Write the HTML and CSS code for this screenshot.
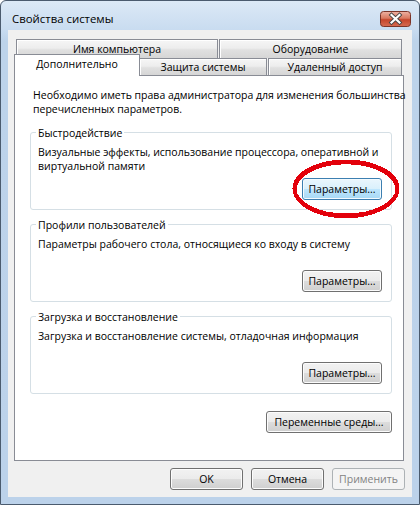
FILE: index.html
```html
<!DOCTYPE html>
<html lang="ru">
<head>
<meta charset="utf-8">
<title>Свойства системы</title>
<link rel="stylesheet" href="styles.css">
</head>
<body>
<div class="window">
  <div class="titlebar">
    <span class="title">Свойства системы</span>
    <button class="close" aria-label="Закрыть">
      <svg width="31" height="16" viewBox="0 0 31 16">
        <defs>
          <linearGradient id="cg" x1="0" y1="0" x2="0" y2="1">
            <stop offset="0" stop-color="#eeb3a5"/>
            <stop offset="0.45" stop-color="#d9785f"/>
            <stop offset="0.55" stop-color="#c5452b"/>
            <stop offset="1" stop-color="#d66c52"/>
          </linearGradient>
        </defs>
        <rect x="0.5" y="0.5" width="30" height="15" rx="3" fill="url(#cg)" stroke="#7b3428"/>
        <path d="M11.5 4 L19.5 11.5 M19.5 4 L11.5 11.5" stroke="#444" stroke-width="4" stroke-linecap="square"/>
        <path d="M11.5 4 L19.5 11.5 M19.5 4 L11.5 11.5" stroke="#fff" stroke-width="2.2" stroke-linecap="square"/>
      </svg>
    </button>
  </div>
  <div class="client">
    <div class="tabctl">
      <div class="tabrow row1">
        <div class="tab tab-name">Имя компьютера</div>
        <div class="tab tab-hw">Оборудование</div>
      </div>
      <div class="tabrow row2">
        <div class="tab tab-active tab-adv">Дополнительно</div>
        <div class="tab tab-prot">Защита системы</div>
        <div class="tab tab-remote">Удаленный доступ</div>
      </div>
      <div class="panel">
        <p class="note">Необходимо иметь права администратора для изменения большинства<br>перечисленных параметров.</p>
        <div class="group">
          <div class="group-title">Быстродействие</div>
          <p class="group-text">Визуальные эффекты, использование процессора, оперативной и<br>виртуальной памяти</p>
          <div class="group-actions">
            <span class="marked">
              <button class="btn btn-focus btn-param">Параметры...</button>
              <svg class="mark" width="108" height="60" viewBox="0 0 108 60" shape-rendering="crispEdges">
                <ellipse cx="54" cy="29.5" rx="51.5" ry="27" fill="none" stroke="#e3000b" stroke-width="4"/>
                <ellipse cx="54" cy="30.5" rx="51" ry="27" fill="none" stroke="#e3000b" stroke-width="3.5"/>
              </svg>
            </span>
          </div>
        </div>
        <div class="group">
          <div class="group-title">Профили пользователей</div>
          <p class="group-text">Параметры рабочего стола, относящиеся ко входу в систему</p>
          <div class="group-actions">
            <button class="btn btn-param">Параметры...</button>
          </div>
        </div>
        <div class="group">
          <div class="group-title">Загрузка и восстановление</div>
          <p class="group-text">Загрузка и восстановление системы, отладочная информация</p>
          <div class="group-actions">
            <button class="btn btn-param">Параметры...</button>
          </div>
        </div>
        <div class="panel-actions">
          <button class="btn btn-env">Переменные среды...</button>
        </div>
      </div>
    </div>
    <div class="dialog-actions">
      <button class="btn btn-dlg">OK</button>
      <button class="btn btn-dlg">Отмена</button>
      <button class="btn btn-dlg" disabled>Применить</button>
    </div>
  </div>
</div>
</body>
</html>
```
FILE: styles.css
```css
html, body {
  margin: 0;
  padding: 0;
  background: #ffffff;
}

body {
  font-family: "Open Sans", "Noto Sans", sans-serif;
  font-size: 10.5px;
  color: #000;
}

.window {
  width: 420px;
  height: 505px;
  box-sizing: border-box;
  border: 1px solid #4b5b6e;
  border-radius: 6px 6px 0 0;
  background: linear-gradient(to bottom, #dce9f6 0px, #c9dcf0 28px, #bdd3ea 40px, #bcd2ea 100%);
  padding: 0 7px 7px;
  display: flex;
  flex-direction: column;
}

.titlebar {
  height: 29px;
  margin: 0 -7px;
  padding: 0 8px 0 11px;
  display: flex;
  justify-content: space-between;
  align-items: flex-start;
}

.title {
  font-size: 11.4px;
  line-height: 14px;
  margin-top: 11px;
}

.close {
  margin: 10px 0 0;
  padding: 0;
  border: 0;
  background: none;
  width: 31px;
  height: 16px;
  display: block;
}

.close svg {
  display: block;
}

.client {
  flex: 1;
  background: #f0f0f0;
  display: flex;
  flex-direction: column;
}

.tabctl {
  margin: 9px 0 0 6px;
  width: 390px;
}

.tabrow {
  display: flex;
  gap: 1px;
  padding-left: 2px;
}

.row1 {
  height: 19px;
}

.row2 {
  height: 17px;
}

.tab {
  box-sizing: border-box;
  border: 1px solid #898c95;
  border-bottom: none;
  background: linear-gradient(to bottom, #f6f6f6 0%, #ededed 45%, #e0e0e0 55%, #d6d6d6 100%);
  box-shadow: inset 1px 1px 0 #ffffff;
  display: flex;
  align-items: center;
  justify-content: center;
  line-height: 14px;
  white-space: nowrap;
}

.row1 .tab {
  height: 19px;
}

.row2 .tab {
  height: 17px;
}

.tab-name { width: 202px; }
.tab-hw { width: 183px; }
.tab-prot { width: 128px; }
.tab-remote { width: 134px; }

.row2 .tab-active {
  width: 126px;
  height: 22px;
  margin: -4px -2px 0 -2px;
  padding-bottom: 3px;
  position: relative;
  z-index: 1;
  background: #ffffff;
  box-shadow: none;
}

.panel {
  height: 386px;
  box-sizing: border-box;
  border: 1px solid #898c95;
  background: #ffffff;
  display: flex;
  flex-direction: column;
}

.note {
  margin: 12px 0 0 18px;
  line-height: 14px;
  white-space: nowrap;
}

.group {
  margin: 16px 11px 0 15px;
  height: 78px;
  box-sizing: border-box;
  border: 1px solid #d5dfe5;
  border-radius: 3px;
  display: flex;
  flex-direction: column;
  align-items: flex-start;
}

.group + .group {
  margin-top: 14px;
}

.group-title {
  margin: -7px 0 0 5px;
  padding: 0 2px;
  background: #ffffff;
  line-height: 14px;
}

.group-text {
  margin: 5px 0 0 7px;
  line-height: 14px;
  white-space: nowrap;
}

.group-actions {
  margin: auto 9px 9px 0;
  align-self: flex-end;
}

.marked {
  position: relative;
  display: inline-block;
  vertical-align: top;
}

.mark {
  position: absolute;
  left: -10px;
  top: -19px;
  pointer-events: none;
}

.panel-actions {
  margin: 17px 11px 0 0;
  align-self: flex-end;
}

.btn {
  display: block;
  height: 22px;
  box-sizing: border-box;
  padding: 0 4px;
  border: 1px solid #707070;
  border-radius: 3px;
  background: linear-gradient(to bottom, #f2f2f2 0%, #ebebeb 50%, #dddddd 50%, #cfcfcf 100%);
  box-shadow: inset 0 0 0 1px #fcfcfc;
  font-family: inherit;
  font-size: 10.5px;
  line-height: 14px;
  color: #000;
  text-align: center;
  white-space: nowrap;
}

.btn-focus {
  border-color: #3c7fb1;
  background: linear-gradient(to bottom, #eaf6fd 0%, #d9f0fc 50%, #bee6fd 50%, #a7d9f5 100%);
  box-shadow: inset 0 0 0 1px #f4fbff;
}

.btn-param { width: 80px; }
.btn-env { width: 126px; }
.btn-dlg { width: 73px; }

.btn:disabled {
  border-color: #adb2b5;
  background: #f4f4f4;
  box-shadow: none;
  color: #838383;
}

.dialog-actions {
  display: flex;
  justify-content: flex-end;
  gap: 8px;
  margin: 7px 7px 0 0;
}
```
